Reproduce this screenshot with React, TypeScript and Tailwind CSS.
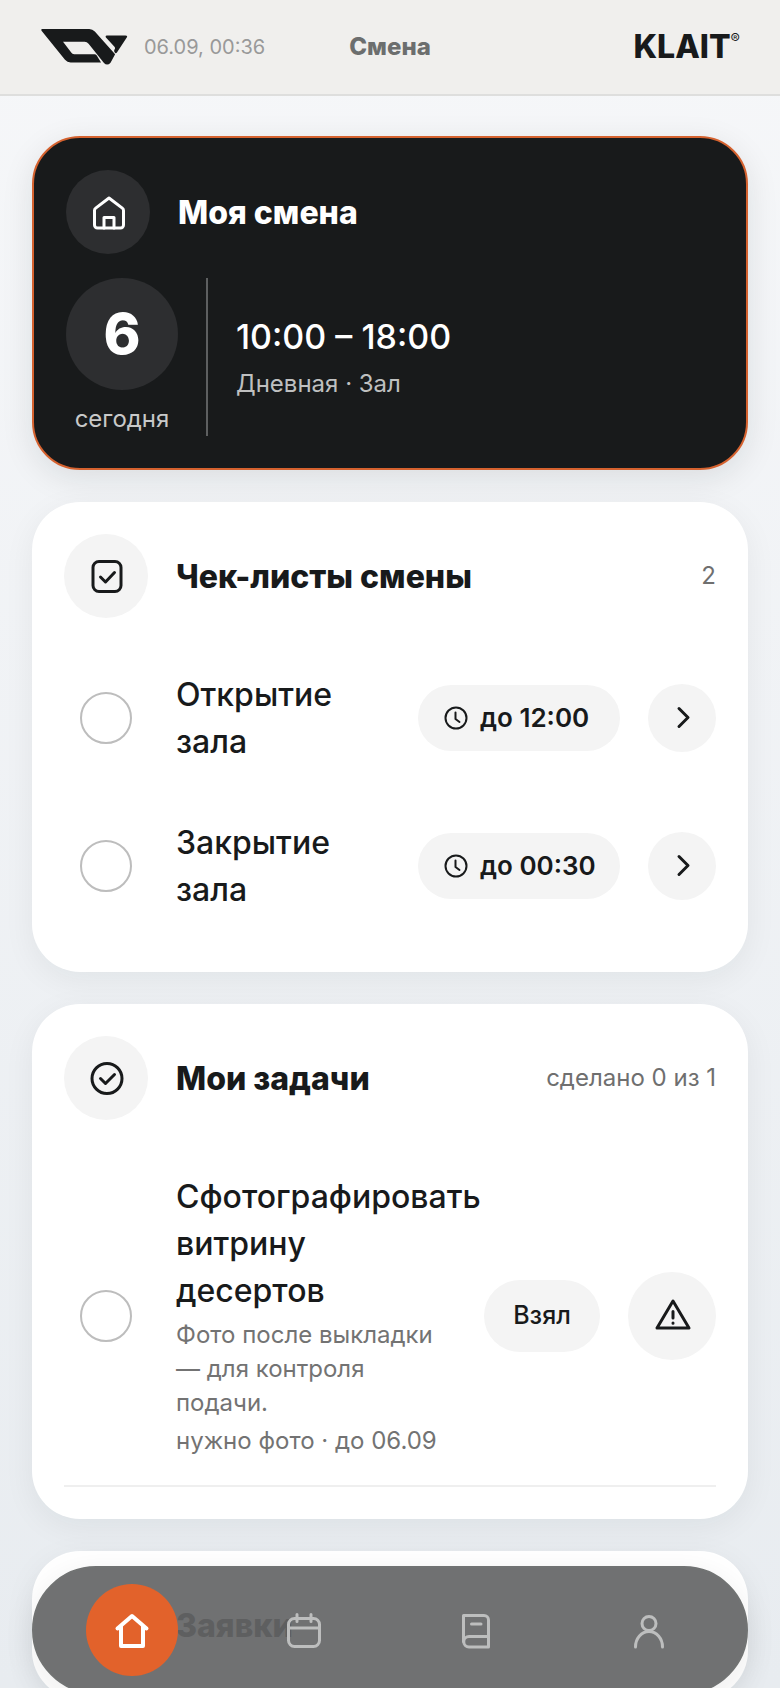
import type { ReactNode } from "react";
import clsx from "clsx";

function Icon({ children, strokeWidth = 3 }: { children: ReactNode; strokeWidth?: number }) {
  return (
    <svg
      viewBox="0 0 40 40"
      fill="none"
      stroke="currentColor"
      strokeWidth={strokeWidth}
      strokeLinecap="round"
      strokeLinejoin="round"
      className="h-10 w-10"
      aria-hidden
    >
      {children}
    </svg>
  );
}

function LogoMark() {
  return (
    <svg viewBox="0 0 264 116" className="h-[38px] w-[88px] shrink-0" fill="currentColor" aria-hidden>
      {/* ribbon with the slanted window */}
      <path d="M3 9Q-1 3 5 3H148Q158 3 165 11L227 80L213 106Q203 117 193 107L146 48Q141 42 134 42H68L93 75Q96 80 102 80H164Q168 80 171 84L184 105H91Q81 105 74 97Z" />
      <path d="M202 23H258Q267 23 262 30L233 74Q229 80 226 75Q222 70 226 64Q228 61 225 57L199 29Q196 23 202 23Z" />
    </svg>
  );
}

function Card({
  icon,
  title,
  note,
  faded = false,
  children,
}: {
  icon?: ReactNode;
  title: string;
  note?: string;
  /** ещё не загружена: без подложки иконки и с бледным заголовком */
  faded?: boolean;
  children?: ReactNode;
}) {
  return (
    <section className="rounded-[48px] bg-white p-8 shadow-[0_8px_32px_rgba(24,26,27,0.06)]">
      <div className="flex items-center gap-7">
        <span
          className={clsx(
            "flex h-[84px] w-[84px] shrink-0 items-center justify-center rounded-full",
            !faded && "bg-[#f4f4f4]",
          )}
        >
          {icon}
        </span>
        <h2 className={clsx("flex-1 text-[32px] leading-[47px] font-extrabold", faded && "text-[#cfcfcf]")}>{title}</h2>
        {note ? <span className="text-2xl text-[#6f6f6f]">{note}</span> : null}
      </div>
      {children}
    </section>
  );
}

const checkboxCls = "ml-4 h-[52px] w-[52px] shrink-0 appearance-none rounded-full border-2 border-[#bdbdbd] bg-white";

const checklists = [
  { id: "open", title: "Открытие зала", due: "до 12:00" },
  { id: "close", title: "Закрытие зала", due: "до 00:30" },
];

const tabs = [
  {
    label: "Смена",
    active: true,
    icon: <path d="M5.5 18.5L20 6l14.5 12.5M9 16.5V36h22V16.5" />,
  },
  {
    label: "Календарь",
    icon: (
      <>
        <rect x="4.5" y="8.5" width="31" height="28" rx="6" />
        <path d="M5 18h30M13 4.500v7M27 4.500v7" />
      </>
    ),
  },
  {
    label: "Справочник",
    icon: (
      <>
        <path d="M7.5 32V5.5H28a4.5 4.5 0 0 1 4.5 4.5v27H13a5 5 0 0 1 0-10.5h19" />
        <path d="M15.5 14H25" />
      </>
    ),
  },
  {
    label: "Профиль",
    icon: (
      <>
        <circle cx="21" cy="13.5" r="7" />
        <path d="M7.5 37a13.5 15.500 0 0 1 27 0" />
      </>
    ),
  },
];

export default function App() {
  return (
    <div className="flex h-screen flex-col overflow-hidden bg-linear-to-b from-[#f6f7f9] to-[#e8ecf0] font-['Inter','Noto_Sans',sans-serif] text-[#181a1b]">
      <header className="grid h-24 shrink-0 grid-cols-3 items-center border-b-2 border-[#dededd] bg-[#f0efed] px-10">
        <div className="flex items-center gap-4">
          <LogoMark />
          <time className="text-[20px] whitespace-nowrap text-[#999]">06.09, 00:36</time>
        </div>
        <h1 className="text-center text-2xl font-extrabold text-[#6c6e6e]">Смена</h1>
        <div className="flex items-start justify-end text-[32px] leading-10 font-extrabold">
          KLAIT<span className="text-[14px] leading-6 font-normal">®</span>
        </div>
      </header>

      <main className="flex flex-1 flex-col gap-8 overflow-y-auto px-8 pt-10 pb-40 [scrollbar-width:none]">
        <section className="rounded-[48px] border-2 border-[#d5622f] bg-[#181a1b] p-8 text-white shadow-[0_8px_32px_rgba(24,26,27,0.10)]">
          <div className="flex items-center gap-7">
            <span className="flex h-[84px] w-[84px] items-center justify-center rounded-full bg-[#2d2e30]">
              <Icon>
                <path d="M6.5 18.500a3 3 0 0 1 1.2-2.4L21 6l13.300 10.100a3 3 0 0 1 1.2 2.4V33a3 3 0 0 1-3 3h-23a3 3 0 0 1-3-3Z" />
                <path d="M16 36V25.500h10V36" />
              </Icon>
            </span>
            <h2 className="text-[32px] leading-[47px] font-extrabold">Моя смена</h2>
          </div>
          <div className="mt-6 flex">
            <div className="flex flex-col items-center pr-7">
              <span className="flex h-28 w-28 items-center justify-center rounded-full bg-[#2d2e30] text-[56px] leading-none font-extrabold">
                6
              </span>
              <span className="mt-3 text-2xl leading-[34px] text-[#c8c9c9]">сегодня</span>
            </div>
            <div className="flex flex-col justify-center border-l-2 border-[#5d5f60] pt-1.5 pl-7">
              <div className="text-[34px] leading-[47px] font-medium">10:00 – 18:00</div>
              <div className="text-2xl leading-[47px] text-[#bfc0c0]">Дневная · Зал</div>
            </div>
          </div>
        </section>

        <Card
          title="Чек-листы смены"
          note="2"
          icon={
            <Icon>
              <rect x="7" y="5.5" width="28" height="30" rx="6" />
              <path d="M14.5 21l5 5 9-9.500" />
            </Icon>
          }
        >
          <ul className="mt-[26px]">
            {checklists.map((c) => (
              <li key={c.id} className="flex items-center gap-7 py-[27px]">
                <input type="checkbox" id={c.id} className={checkboxCls} />
                <label htmlFor={c.id} className="ml-4 flex-1 text-[32px] leading-[47px] font-medium">
                  {c.title}
                </label>
                <span className="flex h-[66px] w-[202px] items-center gap-3 rounded-full bg-[#f4f4f4] pl-[26px] text-[26px] leading-8 font-semibold whitespace-nowrap">
                  <svg
                    viewBox="0 0 24 24"
                    className="h-6 w-6"
                    fill="none"
                    stroke="currentColor"
                    strokeWidth={2}
                    strokeLinecap="round"
                    strokeLinejoin="round"
                    aria-hidden
                  >
                    <circle cx="12" cy="12" r="10.5" />
                    <path d="M11.500 6.500V13l4 3" />
                  </svg>
                  {c.due}
                </span>
                <button
                  type="button"
                  aria-label={`Открыть: ${c.title}`}
                  className="flex h-[68px] w-[68px] shrink-0 items-center justify-center rounded-full bg-[#f4f4f4]"
                >
                  <Icon>
                    <path d="M17 10.500l9 9-9 9" />
                  </Icon>
                </button>
              </li>
            ))}
          </ul>
        </Card>

        <Card
          title="Мои задачи"
          note="сделано 0 из 1"
          icon={
            <Icon>
              <circle cx="21" cy="20.5" r="15" />
              <path d="M14.5 20.500l5 5 9-9" />
            </Icon>
          }
        >
          <div className="mt-[26px] flex items-center gap-7 border-b-2 border-[#efefef] py-[27px]">
            <input type="checkbox" id="photo" className={checkboxCls} />
            <div className="ml-4 w-0 flex-1">
              <label htmlFor="photo" className="block text-[32px] leading-[47px] font-medium">
                Сфотографировать витрину десертов
              </label>
              <p className="mt-1 text-2xl leading-[34px] text-[#737373]">Фото после выкладки — для контроля подачи.</p>
              <p className="mt-1 text-2xl leading-[34px] text-[#737373]">нужно фото · до 06.09</p>
            </div>
            <button
              type="button"
              className="h-[72px] w-[116px] shrink-0 rounded-full bg-[#f4f4f4] text-[25px] font-medium"
            >
              Взял
            </button>
            <button
              type="button"
              aria-label="Сообщить о проблеме"
              className="flex h-[88px] w-[88px] shrink-0 items-center justify-center rounded-full bg-[#f4f4f4]"
            >
              <Icon>
                <path d="M21 5L37 32H5Z" />
                <path d="M21 15.500v6.500M21 27v.2" />
              </Icon>
            </button>
          </div>
        </Card>

        <Card title="Заявки" faded />
      </main>

      <nav className="fixed inset-x-8 -bottom-1.5 flex h-32 items-center rounded-full border-2 border-[#717373] bg-[#181a1b]/62 px-3 shadow-[0_8px_32px_rgba(24,26,27,0.08)]">
        {tabs.map((t) => (
          <a key={t.label} href="#" aria-label={t.label} className="flex flex-1 justify-center">
            <span
              className={clsx(
                "flex h-[92px] w-[92px] items-center justify-center rounded-full",
                t.active ? "bg-[#e2622b] text-white" : "text-[#bdbebe]",
              )}
            >
              <Icon strokeWidth={t.active ? 4 : 3}>{t.icon}</Icon>
            </span>
          </a>
        ))}
      </nav>
    </div>
  );
}
